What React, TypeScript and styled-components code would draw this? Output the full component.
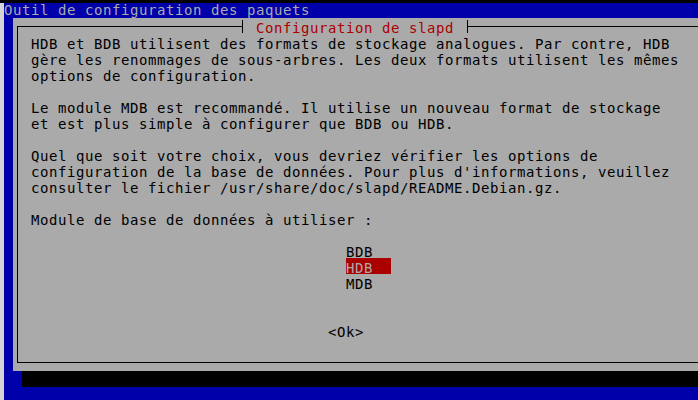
import React from "react";
import styled, { createGlobalStyle } from "styled-components";

const GlobalStyle = createGlobalStyle`
  html, body {
    margin: 0;
    padding: 0;
    background: #0000aa;
    overflow: hidden;
  }
`;

const Frame = styled.div`
  display: flex;
  width: 698px;
  height: 400px;
  box-sizing: border-box;
  border-top: 3px solid #000;
  font-family: "DejaVu Sans Mono", "Liberation Mono", monospace;
  font-size: 14px;
  letter-spacing: 0.57px;
`;

const WindowEdge = styled.div`
  flex: none;
  width: 4px;
  background: #d4d4d4;
`;

const Screen = styled.div`
  flex: 1;
  min-width: 0;
  display: flex;
  flex-direction: column;
  background: #0000aa;
  overflow: hidden;
`;

const BackTitle = styled.div`
  height: 15px;
  line-height: 15px;
  color: #aaaaaa;
  white-space: pre;
`;

const Dialog = styled.section`
  flex: none;
  display: flex;
  flex-direction: column;
  width: 720px;
  height: 353px;
  margin-left: 9px;
  background: #aaaaaa;
`;

const Box = styled.div`
  flex: 1;
  display: flex;
  flex-direction: column;
  margin: 8px 0 8px 4px;
  border-left: 1px solid #000;
  border-bottom: 1px solid #000;
`;

const TitleRow = styled.div`
  display: flex;
  height: 16px;
  margin: -8px 0 0 -1px;
`;

const Rule = styled.div<{ $width?: number }>`
  flex: ${(p) => (p.$width ? `none` : `1`)};
  width: ${(p) => (p.$width ? `${p.$width}px` : `auto`)};
  margin-top: 8px;
  height: 0;
  border-top: 1px solid #000;
`;

// box drawing ┤ / ├ around the dialog title
const Tick = styled.span<{ $side: "left" | "right" }>`
  position: relative;
  flex: none;
  width: 9px;
  height: 16px;

  &::before {
    content: "";
    position: absolute;
    top: 8px;
    height: 1px;
    background: #000;
    left: ${(p) => (p.$side === "left" ? "0" : "4px")};
    right: ${(p) => (p.$side === "left" ? "4px" : "0")};
  }

  &::after {
    content: "";
    position: absolute;
    top: 2px;
    bottom: 1px;
    left: 4px;
    width: 1px;
    background: #000;
  }
`;

const Title = styled.span`
  flex: none;
  box-sizing: border-box;
  height: 16px;
  padding-top: 2px;
  line-height: 16px;
  color: #aa0000;
  white-space: pre;
`;

const Content = styled.div`
  display: flex;
  flex-direction: column;
  padding-left: 13px;
  color: #000;
  line-height: 16px;
`;

const Message = styled.div`
  box-sizing: border-box;
  height: 208px;
  padding-top: 2px;
`;

const Paragraph = styled.p`
  margin: 0 0 16px;
  white-space: pre;
`;

const Menu = styled.div`
  display: flex;
  flex-direction: column;
  margin-left: 315px;
`;

const MenuItem = styled.div<{ $selected?: boolean }>`
  box-sizing: border-box;
  width: 45px;
  height: 16px;
  padding-top: 2px;
  white-space: pre;
  color: ${(p) => (p.$selected ? "#aaaaaa" : "#000")};
  background: ${(p) => (p.$selected ? "#aa0000" : "transparent")};
`;

const ButtonRow = styled.div`
  box-sizing: border-box;
  height: 16px;
  margin: 32px 0 0 297px;
  padding-top: 2px;
  white-space: pre;
`;

const Shadow = styled.div`
  flex: none;
  height: 16px;
  margin-left: 18px;
  background: #000;
`;

const paragraphs = [
  "HDB et BDB utilisent des formats de stockage analogues. Par contre, HDB\ngère les renommages de sous-arbres. Les deux formats utilisent les mêmes\noptions de configuration.",
  "Le module MDB est recommandé. Il utilise un nouveau format de stockage\net est plus simple à configurer que BDB ou HDB.",
  "Quel que soit votre choix, vous devriez vérifier les options de\nconfiguration de la base de données. Pour plus d'informations, veuillez\nconsulter le fichier /usr/share/doc/slapd/README.Debian.gz.",
  "Module de base de données à utiliser :",
];

const modules = ["BDB", "HDB", "MDB"];

export default function App() {
  const selected = "HDB";
  return (
    <>
      <GlobalStyle />
      <Frame>
        <WindowEdge />
        <Screen>
          <BackTitle>Outil de configuration des paquets</BackTitle>
          <Dialog>
            <Box>
              <TitleRow>
                <Rule $width={221} />
                <Tick $side="left" />
                <Title> Configuration de slapd </Title>
                <Tick $side="right" />
                <Rule />
              </TitleRow>
              <Content>
                <Message>
                  {paragraphs.map((text, i) => (
                    <Paragraph key={i}>{text}</Paragraph>
                  ))}
                </Message>
                <Menu>
                  {modules.map((m) => (
                    <MenuItem key={m} $selected={m === selected}>
                      {m}
                    </MenuItem>
                  ))}
                </Menu>
                <ButtonRow>&lt;Ok&gt;</ButtonRow>
              </Content>
            </Box>
          </Dialog>
          <Shadow />
        </Screen>
      </Frame>
    </>
  );
}
